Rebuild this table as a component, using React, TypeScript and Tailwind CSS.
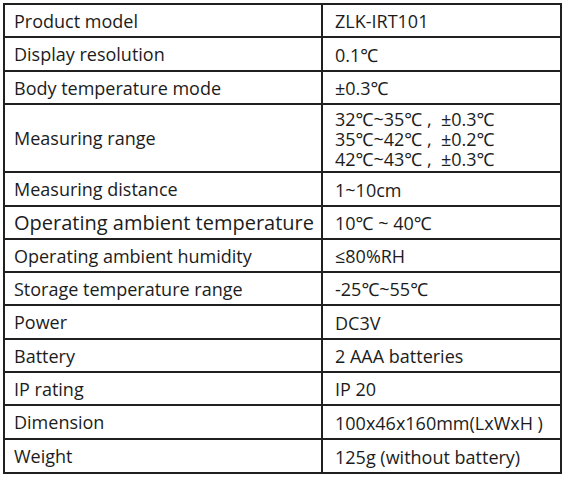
import React from "react"

type Spec = {
  label: string
  value: string[]
  h: string
  big?: boolean
}

const specs: Spec[] = [
  { label: "Product model", value: ["ZLK-IRT101"], h: "h-[33px]" },
  { label: "Display resolution", value: ["0.1℃"], h: "h-[34px]" },
  { label: "Body temperature mode", value: ["±0.3℃"], h: "h-[33px]" },
  {
    label: "Measuring range",
    value: ["32℃~35℃ ,  ±0.3℃", "35℃~42℃ ,  ±0.2℃", "42℃~43℃ ,  ±0.3℃"],
    h: "h-[68px]",
  },
  { label: "Measuring distance", value: ["1~10cm"], h: "h-[34px]" },
  { label: "Operating ambient temperature", value: ["10℃ ~ 40℃"], h: "h-[33px]", big: true },
  { label: "Operating ambient humidity", value: ["≤80%RH"], h: "h-[33px]" },
  { label: "Storage temperature range", value: ["-25℃~55℃"], h: "h-[33px]" },
  { label: "Power", value: ["DC3V"], h: "h-[34px]" },
  { label: "Battery", value: ["2 AAA batteries"], h: "h-[33px]" },
  { label: "IP rating", value: ["IP 20"], h: "h-[33px]" },
  { label: "Dimension", value: ["100x46x160mm(LxWxH )"], h: "h-[34px]" },
  { label: "Weight", value: ["125g (without battery)"], h: "h-[32px]" },
]

export default function App() {
  return (
    <div className="h-[478px] w-[570px] bg-white pl-[3px] pt-[3px] font-['Open_Sans','Noto_Sans','DejaVu_Sans',sans-serif] text-[#1c1c1c]">
      <div className="w-[559px] border-2 border-[#202020]">
        {specs.map((row, i) => (
          <div
            key={row.label}
            className={`flex ${row.h} ${i < specs.length - 1 ? "border-b-2 border-[#202020]" : ""}`}
          >
            <div
              className={`flex w-[318px] shrink-0 items-center border-r-2 border-[#202020] pl-[9px] pt-[1px] ${
                row.big ? "text-[20px]" : "text-[18px]"
              }`}
            >
              {row.label}
            </div>
            <div className="flex items-center pl-[12px] pt-[1px] text-[18px] leading-[20px]">
              <p className="whitespace-pre">
                {row.value.map((v, j) => (
                  <React.Fragment key={v}>
                    {j > 0 && <br />}
                    {v}
                  </React.Fragment>
                ))}
              </p>
            </div>
          </div>
        ))}
      </div>
    </div>
  )
}
